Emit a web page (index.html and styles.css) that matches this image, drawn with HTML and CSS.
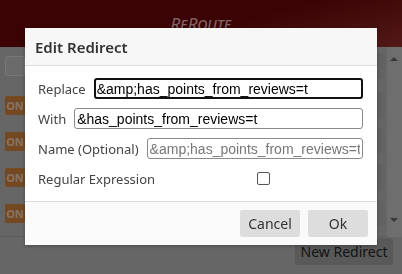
FILE: index.html
```html
<!doctype html>
<html>
<head>
  <link rel="stylesheet" href="styles.css">
</head>
<body>
  <div class="header">
    <span class="brand">ReRoute</span>
  </div>

  <div class="main">
    <div class="list">
      <div class="row top">
        <span class="selectAll"></span>
        <span class="card"></span>
      </div>
      <div class="row">
        <span class="on">ON</span>
        <span class="card"></span>
      </div>
      <div class="row">
        <span class="on">ON</span>
        <span class="card"></span>
      </div>
      <div class="row">
        <span class="on">ON</span>
        <span class="card"></span>
      </div>
      <div class="row">
        <span class="on">ON</span>
        <span class="card"></span>
      </div>
    </div>
    <div class="scrollbar">
      <span class="arrow up"></span>
      <span class="arrow down"></span>
    </div>
  </div>

  <div class="footer">
    <button class="newBtn">New Redirect</button>
  </div>

  <div class="overlay">
    <div class="modal">
      <div class="modalHead">Edit Redirect</div>
      <div class="modalBody">
        <div class="field">
          <label>Replace</label>
          <input class="focused" type="text" value="&amp;amp;has_points_from_reviews=t">
        </div>
        <div class="field">
          <label>With</label>
          <input type="text" value="&amp;has_points_from_reviews=t">
        </div>
        <div class="field">
          <label>Name (Optional)</label>
          <input type="text" placeholder="&amp;amp;has_points_from_reviews=t">
        </div>
        <div class="field">
          <label>Regular Expression</label>
          <div class="checkCell"><span class="check"></span></div>
        </div>
      </div>
      <div class="modalFoot">
        <button class="btn">Cancel</button>
        <button class="btn">Ok</button>
      </div>
    </div>
  </div>
</body>
</html>
```

FILE: styles.css
```css
body{
  margin: 0;
  width: 402px;
  height: 274px;
  overflow: hidden;
  background: #ababab;
  font-family: "Noto Sans", "Open Sans", sans-serif;
}
.header{
  height: 47px;
  background: linear-gradient(165deg, #630606 55%, #8a2a2a 100%);
  text-align: center;
  box-sizing: border-box;
  padding-top: 12px;
}
.brand{
  color: #d9a8a8;
  font-style: italic;
  font-variant: small-caps;
  font-size: 17px;
}
.main{
  display: flex;
  height: 190px;
}
.list{
  flex: 1;
  padding: 6px 2px 0 5px;
  border-bottom: 1px solid #999;
}
.row{
  display: flex;
  align-items: center;
  height: 26px;
  margin-bottom: 10px;
}
.row.top{
  margin-bottom: 13px;
}
.selectAll{
  width: 18px;
  height: 18px;
  border: 1px solid #c8c8c8;
  border-radius: 3px;
  background: #b2b2b2;
}
.on{
  width: 20px;
  height: 19px;
  line-height: 19px;
  border-radius: 2px;
  background: #c27a3a;
  color: #dcc0a8;
  font-size: 11px;
  text-align: center;
  font-weight: bold;
}
.card{
  flex: 1;
  height: 26px;
  margin-left: 4px;
  border-radius: 4px;
  background: #a3a3a3;
}
.scrollbar{
  width: 15px;
  background: #b8b8b8;
  position: relative;
}
.arrow{
  position: absolute;
  left: 3px;
  width: 0;
  height: 0;
  border-left: 4px solid transparent;
  border-right: 4px solid transparent;
}
.arrow.up{
  top: 10px;
  border-bottom: 4px solid #606060;
}
.arrow.down{
  top: 171px;
  border-top: 4px solid #606060;
}
.footer{
  display: flex;
  justify-content: flex-end;
  padding: 1px 9px 0 0;
}
.newBtn{
  width: 98px;
  height: 27px;
  border: none;
  border-radius: 2px;
  background: #959595;
  color: #222;
  font-family: "Noto Sans", sans-serif;
  font-size: 14px;
  padding: 0;
}
.overlay{
  position: fixed;
  top: 0;
  left: 0;
  right: 0;
  bottom: 0;
  background: rgba(0, 0, 0, 0.4);
  display: flex;
  justify-content: center;
  align-items: flex-start;
  padding-top: 28px;
}
.modal{
  width: 352px;
  background: #fff;
  box-shadow: 0 1px 4px rgba(0, 0, 0, 0.3);
}
.modalHead{
  height: 38px;
  line-height: 38px;
  box-sizing: border-box;
  padding-left: 10px;
  background: #f7f7f7;
  border-bottom: 1px solid #ddd;
  font-size: 15px;
  font-weight: 600;
  color: #333;
}
.modalBody{
  padding: 12px 14px 12px 13px;
  display: flex;
  flex-direction: column;
  gap: 9px;
  border-bottom: 1px solid #ddd;
}
.field{
  display: flex;
  align-items: center;
  height: 21px;
  gap: 8px;
}
.field label{
  font-size: 13px;
  color: #444;
  white-space: nowrap;
}
.field input{
  flex: 1;
  min-width: 0;
  height: 21px;
  box-sizing: border-box;
  border: 1px solid #8a8a8a;
  border-radius: 3px;
  padding: 1px 2px;
  font-family: "Liberation Sans", Arial, sans-serif;
  font-size: 14px;
  color: #000;
}
.field input.focused{
  border: 2px solid #111;
  padding: 0 1px;
}
.field input::placeholder{
  color: #777;
}
.checkCell{
  flex: 1;
  display: flex;
  justify-content: center;
}
.check{
  width: 11px;
  height: 11px;
  border: 1px solid #555;
  border-radius: 2px;
}
.modalFoot{
  display: flex;
  justify-content: flex-end;
  gap: 8px;
  padding: 8px 9px 8px 0;
  background: #fafafa;
}
.btn{
  width: 60px;
  height: 27px;
  border: none;
  border-radius: 2px;
  background: #ddd;
  color: #333;
  font-family: "Noto Sans", sans-serif;
  font-size: 14px;
  padding: 0;
}
```
